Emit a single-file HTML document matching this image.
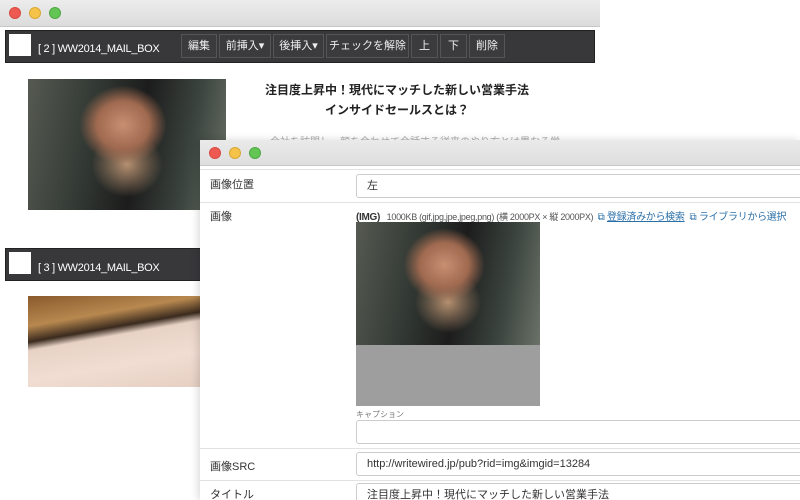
<!DOCTYPE html>
<html><head><meta charset="utf-8"><style>
*{box-sizing:border-box;margin:0;padding:0}
html,body{width:800px;height:500px;overflow:hidden}
body{background:#fff;font-family:"Liberation Sans","Noto Sans CJK JP",sans-serif;position:relative}
.win{position:absolute;background:#fff;overflow:hidden}
.tb{position:absolute;left:0;right:0;top:0;background:linear-gradient(#ececec,#dcdcdc);border-bottom:1px solid #c8c8c8}
.dot{position:absolute;width:12px;height:12px;border-radius:50%;top:7px}
.r{background:#ee5a52;border:1px solid #d84a42}.y{background:#f5c24a;border:1px solid #d9a834}.g{background:#62c554;border:1px solid #4ea843}
.bar{position:absolute;background:#38383b;border:1px solid #222;}
.sq{position:absolute;background:#fff;width:22px;height:22px}
.bt{position:absolute;color:#fff;font-size:11px;top:12px;letter-spacing:-0.3px}
.btn{position:absolute;top:3px;height:24px;border:1px solid #555;background:#3b3b3e;color:#eee;font-size:11px;line-height:22px;text-align:center;white-space:nowrap}
.man{background:radial-gradient(ellipse 22% 30% at 48% 35%,#c88f72 0%,#a06a50 60%,transparent 100%),radial-gradient(ellipse 20% 28% at 50% 65%,#b59070,transparent 90%),linear-gradient(100deg,#555a52 0%,#2f3530 35%,#1c1c1c 55%,#3d4640 80%,#6b7268 100%);position:absolute;overflow:hidden}
.lbl{position:absolute;left:10px;font-size:11px;color:#333}
.inp{position:absolute;left:156px;width:460px;border:1px solid #ccc;border-radius:3px;font-size:11px;color:#333;padding-left:10px;background:#fff;white-space:nowrap;overflow:hidden}
.hr{position:absolute;left:0;right:0;height:1px;background:#e2e2e2}
</style></head><body>
<div class="win" style="left:0;top:0;width:600px;height:500px">
 <div class="tb" style="height:27px"><div class="dot r" style="left:9px"></div><div class="dot y" style="left:29px"></div><div class="dot g" style="left:49px"></div></div>
 <div class="bar" style="left:5px;top:30px;width:590px;height:33px">
  <div class="sq" style="left:3px;top:3px"></div><div class="bt" style="left:32px">[ 2 ] WW2014_MAIL_BOX</div>
  <div class="btn" style="left:175px;width:36px">編集</div>
  <div class="btn" style="left:213px;width:52px">前挿入▾</div>
  <div class="btn" style="left:267px;width:51px">後挿入▾</div>
  <div class="btn" style="left:320px;width:83px">チェックを解除</div>
  <div class="btn" style="left:405px;width:27px">上</div>
  <div class="btn" style="left:434px;width:27px">下</div>
  <div class="btn" style="left:463px;width:36px">削除</div>
 </div>
 <div class="man" style="left:28px;top:79px;width:198px;height:131px"></div>
 <div style="position:absolute;left:232px;top:80px;width:330px;text-align:center;font-size:12px;font-weight:bold;color:#222;line-height:20px">注目度上昇中！現代にマッチした新しい営業手法<br>インサイドセールスとは？</div>
 <div style="position:absolute;left:270px;top:133px;font-size:10px;color:#aaa;white-space:nowrap">会社を訪問し、顔を合わせて会話する従来のやり方とは異なる営</div>
 <div class="bar" style="left:5px;top:248px;width:600px;height:33px"><div class="sq" style="left:3px;top:3px"></div><div class="bt" style="left:32px;top:13px">[ 3 ] WW2014_MAIL_BOX</div></div>
 <div style="position:absolute;left:28px;top:296px;width:175px;height:91px;background:linear-gradient(170deg,#8a5a2c 0%,#b7884f 25%,#3a2a1e 38%,#e8d2c6 45%,#f1ddd2 70%,#e6cfc3 100%)"></div>
</div>
<div class="win" style="left:200px;top:140px;width:600px;height:360px;box-shadow:-2px 0 8px rgba(0,0,0,.15)">
 <div class="tb" style="height:26px;background:linear-gradient(#eaeaea,#dedede)"><div class="dot r" style="left:9px"></div><div class="dot y" style="left:29px"></div><div class="dot g" style="left:49px"></div></div>
 <div class="hr" style="top:29px"></div>
 <div class="lbl" style="top:36px">画像位置</div>
 <div class="inp" style="top:34px;height:24px;line-height:22px">左</div>
 <div class="hr" style="top:62px"></div>
 <div class="lbl" style="top:68px">画像</div>
 <div style="position:absolute;left:156px;top:68px;font-size:9px;color:#555;white-space:nowrap;letter-spacing:-0.3px"><b style="font-size:10px;color:#333">(IMG)</b>&nbsp;&nbsp; 1000KB (gif,jpg,jpe,jpeg,png) (横 2000PX × 縦 2000PX) &nbsp;<span style="color:#2a6fa8;font-size:10px">⧉ <u>登録済みから検索</u> &nbsp;⧉ ライブラリから選択</span></div>
 <div class="man" style="left:156px;top:82px;width:184px;height:123px"></div>
 <div style="position:absolute;left:156px;top:205px;width:184px;height:61px;background:#9e9e9e"></div>
 <div style="position:absolute;left:156px;top:269px;font-size:8px;color:#777">キャプション</div>
 <div class="inp" style="top:280px;height:24px"></div>
 <div class="hr" style="top:308px"></div>
 <div class="lbl" style="top:318px">画像SRC</div>
 <div class="inp" style="top:312px;height:24px;line-height:22px">http://writewired.jp/pub?rid=img&amp;imgid=13284</div>
 <div class="hr" style="top:340px"></div>
 <div class="lbl" style="top:346px">タイトル</div>
 <div class="inp" style="top:343px;height:24px;line-height:22px">注目度上昇中！現代にマッチした新しい営業手法</div>
</div>
</body></html>
